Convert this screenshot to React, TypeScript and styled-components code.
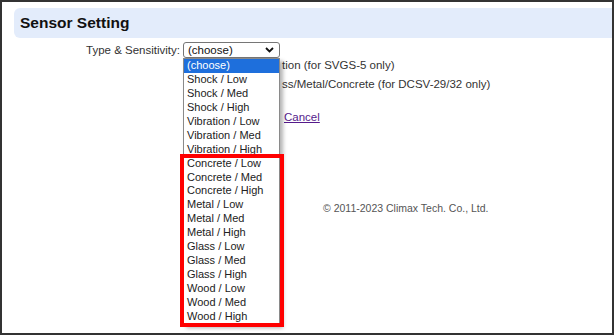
import React from 'react';
import styled, { createGlobalStyle } from "styled-components";

const options = [
  "(choose)",
  "Shock / Low", "Shock / Med", "Shock / High",
  "Vibration / Low", "Vibration / Med", "Vibration / High",
  "Concrete / Low", "Concrete / Med", "Concrete / High",
  "Metal / Low", "Metal / Med", "Metal / High",
  "Glass / Low", "Glass / Med", "Glass / High",
  "Wood / Low", "Wood / Med", "Wood / High",
];

const ROW = 13.95;

export default function App() {
  return (
    <>
      <GlobalStyle />
      <Frame>
        <Header>Sensor Setting</Header>
        <FormRow>
          <Label>Type &amp; Sensitivity:</Label>
          <SelectWrap>
            <SelectBox>
              <span>(choose)</span>
              <svg width="9" height="6" viewBox="0 0 9 6">
                <path d="M1 1 L4.5 4.5 L8 1" fill="none" stroke="#111" strokeWidth="1.8" />
              </svg>
            </SelectBox>
            <Popup>
              {options.map((o, i) => (
                <Option key={o} $active={i === 0}>{o}</Option>
              ))}
              <Marker />
            </Popup>
          </SelectWrap>
        </FormRow>
        {/* the open list covers the start of these lines */}
        <Notes>
          <Note $indent={97}>tion (for SVGS-5 only)</Note>
          <Note $indent={97}>ss/Metal/Concrete (for DCSV-29/32 only)</Note>
        </Notes>
        <Actions>
          <LinkText href="#">Cancel</LinkText>
        </Actions>
        <Footer>© 2011-2023 Climax Tech. Co., Ltd.</Footer>
      </Frame>
    </>
  );
}

const GlobalStyle = createGlobalStyle`
  html, body {
    margin: 0;
    padding: 0;
    background: #fff;
  }
  body {
    font-family: "Liberation Sans", Arial, sans-serif;
  }
`

const Frame = styled.div`
  width: 614px;
  height: 335px;
  box-sizing: border-box;
  border: 2px solid #333;
  overflow: hidden;
  background: #fff;
`

const Header = styled.h2`
  margin: 6px 0 0 12px;
  height: 30px;
  line-height: 30px;
  padding-left: 6px;
  border-radius: 6px 0 0 6px;
  background: #e3ecfb;
  font-size: 15.5px;
  font-weight: bold;
  color: #111;
`

const FormRow = styled.div`
  display: flex;
  align-items: center;
  gap: 3px;
  margin-top: 4px;
  height: 16px;
`

const Label = styled.label`
  width: 178px;
  text-align: right;
  font-size: 11.5px;
  color: #333;
`

const SelectWrap = styled.div`
  position: relative;
`

const SelectBox = styled.div`
  width: 97px;
  height: 16px;
  box-sizing: border-box;
  border: 1px solid #767676;
  border-radius: 3px;
  background: #fff;
  display: flex;
  align-items: center;
  justify-content: space-between;
  padding: 0 5px 0 4px;
  font-size: 11.5px;
  color: #111;

  svg {
    display: block;
  }
`

const Popup = styled.div`
  position: absolute;
  top: 16px;
  left: 0;
  width: 97px;
  box-sizing: border-box;
  border: 1px solid #8a8a8a;
  background: #fff;
  box-shadow: 3px 3px 4px rgba(0, 0, 0, 0.3);
  z-index: 2;
`

const Option = styled.div<{ $active?: boolean }>`
  height: ${ROW}px;
  line-height: ${ROW}px;
  padding-left: 3px;
  font-size: 11px;
  white-space: nowrap;
  color: ${p => (p.$active ? "#fff" : "#222")};
  background: ${p => (p.$active ? "#1e6fdc" : "transparent")};
`

const Marker = styled.div`
  position: absolute;
  left: -4px;
  top: ${1 + 7 * ROW - 4}px;
  width: 104px;
  height: ${12 * ROW + 6}px;
  border: 4px solid #ff0000;
  box-sizing: border-box;
`

const Notes = styled.div`
  margin: -2px 0 0 183px;
  font-size: 11.5px;
  line-height: 19px;
  color: #333;
`

const Note = styled.div<{ $indent: number }>`
  padding-left: ${p => p.$indent}px;
  white-space: nowrap;
`

const Actions = styled.div`
  margin: 16px 0 0 282px;
  line-height: 14px;
  font-size: 11.5px;
`

const LinkText = styled.a`
  color: #551a8b;
  text-decoration: underline;
`

const Footer = styled.div`
  margin: 78px 0 0 321px;
  line-height: 13px;
  font-size: 10.5px;
  color: #555;
`
